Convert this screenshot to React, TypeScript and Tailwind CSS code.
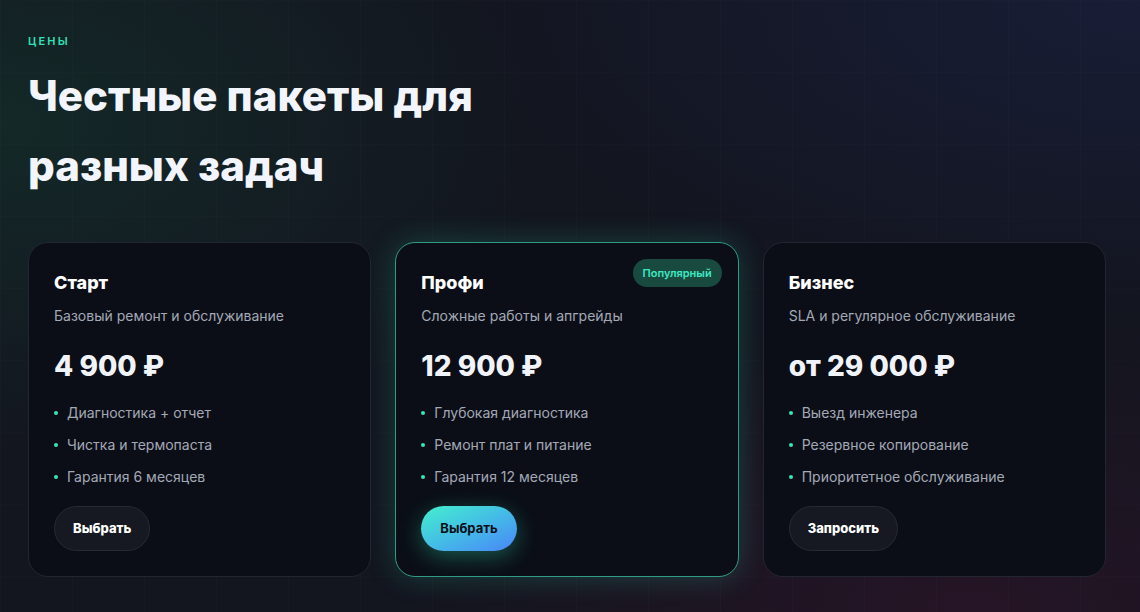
type Plan = {
  name: string;
  note: string;
  price: string;
  features: string[];
  cta: string;
  popular?: boolean;
};

const plans: Plan[] = [
  {
    name: "Старт",
    note: "Базовый ремонт и обслуживание",
    price: "4 900 ₽",
    features: ["Диагностика + отчет", "Чистка и термопаста", "Гарантия 6 месяцев"],
    cta: "Выбрать",
  },
  {
    name: "Профи",
    note: "Сложные работы и апгрейды",
    price: "12 900 ₽",
    features: ["Глубокая диагностика", "Ремонт плат и питание", "Гарантия 12 месяцев"],
    cta: "Выбрать",
    popular: true,
  },
  {
    name: "Бизнес",
    note: "SLA и регулярное обслуживание",
    price: "от 29 000 ₽",
    features: ["Выезд инженера", "Резервное копирование", "Приоритетное обслуживание"],
    cta: "Запросить",
  },
];

function PlanCard({ plan }: { plan: Plan }) {
  return (
    <div
      className={
        plan.popular
          ? "relative flex flex-col rounded-[20px] border border-[#2f9c86] bg-[#0b0e16] px-[25px] pt-[26px] pb-[25px] shadow-[0_0_30px_rgba(45,212,170,0.24)]"
          : "relative flex flex-col rounded-[20px] border border-[#222632] bg-[#0b0e16] px-[25px] pt-[26px] pb-[25px]"
      }
    >
      {plan.popular && (
        <span className="absolute right-[16px] top-[16px] rounded-full bg-[#184a40] px-[10px] py-[6px] text-[11px] font-semibold leading-[16px] text-[#3ee8c2]">
          Популярный
        </span>
      )}
      <h3 className="text-[18px] font-extrabold leading-[28px] text-white">{plan.name}</h3>
      <p className="mt-[9px] text-[14px] leading-[20px] text-[#a4a9b6]">{plan.note}</p>
      <p className="mt-[22px] text-[28px] font-extrabold leading-[36px] text-[#f1f3fa]">{plan.price}</p>
      <ul className="mt-[19px] flex flex-col gap-[12px]">
        {plan.features.map((f) => (
          <li key={f} className="flex items-center gap-[9px] text-[14px] leading-[20px] text-[#a4a9b6]">
            <span className="h-[4px] w-[4px] rounded-full bg-[#36e6bd]" />
            {f}
          </li>
        ))}
      </ul>
      <div className="mt-[19px]">
        {plan.popular ? (
          <button
            type="button"
            className="h-[45px] rounded-full bg-gradient-to-br from-[#45f0cc] to-[#4a84f7] px-[19px] text-[13px] font-bold text-[#0a0f16] shadow-[0_6px_22px_rgba(50,220,180,0.35)]"
          >
            {plan.cta}
          </button>
        ) : (
          <button
            type="button"
            className="h-[45px] rounded-full border border-[#262a35] bg-[#161922] px-[18px] text-[13px] font-extrabold text-white"
          >
            {plan.cta}
          </button>
        )}
      </div>
    </div>
  );
}

export default function App() {
  return (
    <div className="relative h-[612px] w-[1140px] overflow-hidden bg-[#13151f] font-['Inter','Noto_Sans',sans-serif]">
      <div className="absolute inset-0 bg-[radial-gradient(ellipse_70%_80%_at_0%_20%,rgba(20,60,48,0.5),transparent_70%)]" />
      <div className="absolute inset-0 bg-[radial-gradient(ellipse_80%_70%_at_100%_0%,rgba(26,32,62,0.75),transparent_75%)]" />
      <div className="absolute inset-0 bg-[radial-gradient(ellipse_70%_70%_at_85%_100%,rgba(50,20,42,0.6),transparent_70%)]" />
      <div className="absolute inset-0 bg-[linear-gradient(to_right,rgba(255,255,255,0.015)_1px,transparent_1px),linear-gradient(to_bottom,rgba(255,255,255,0.007)_1px,transparent_1px)] bg-[size:72px_72px]" />

      <div className="relative px-[28px] pt-[33px]">
        <p className="text-[11px] font-semibold uppercase leading-[16px] tracking-[0.2em] text-[#33e0b4]">Цены</p>
        <h2 className="mt-[12px] w-[520px] text-[42px] font-extrabold leading-[70px] text-[#f3f5fc]">
          Честные пакеты для разных задач
        </h2>
        <div className="mt-[41px] grid w-[1078px] grid-cols-3 gap-[24px]">
          {plans.map((p) => (
            <PlanCard key={p.name} plan={p} />
          ))}
        </div>
      </div>
    </div>
  );
}
